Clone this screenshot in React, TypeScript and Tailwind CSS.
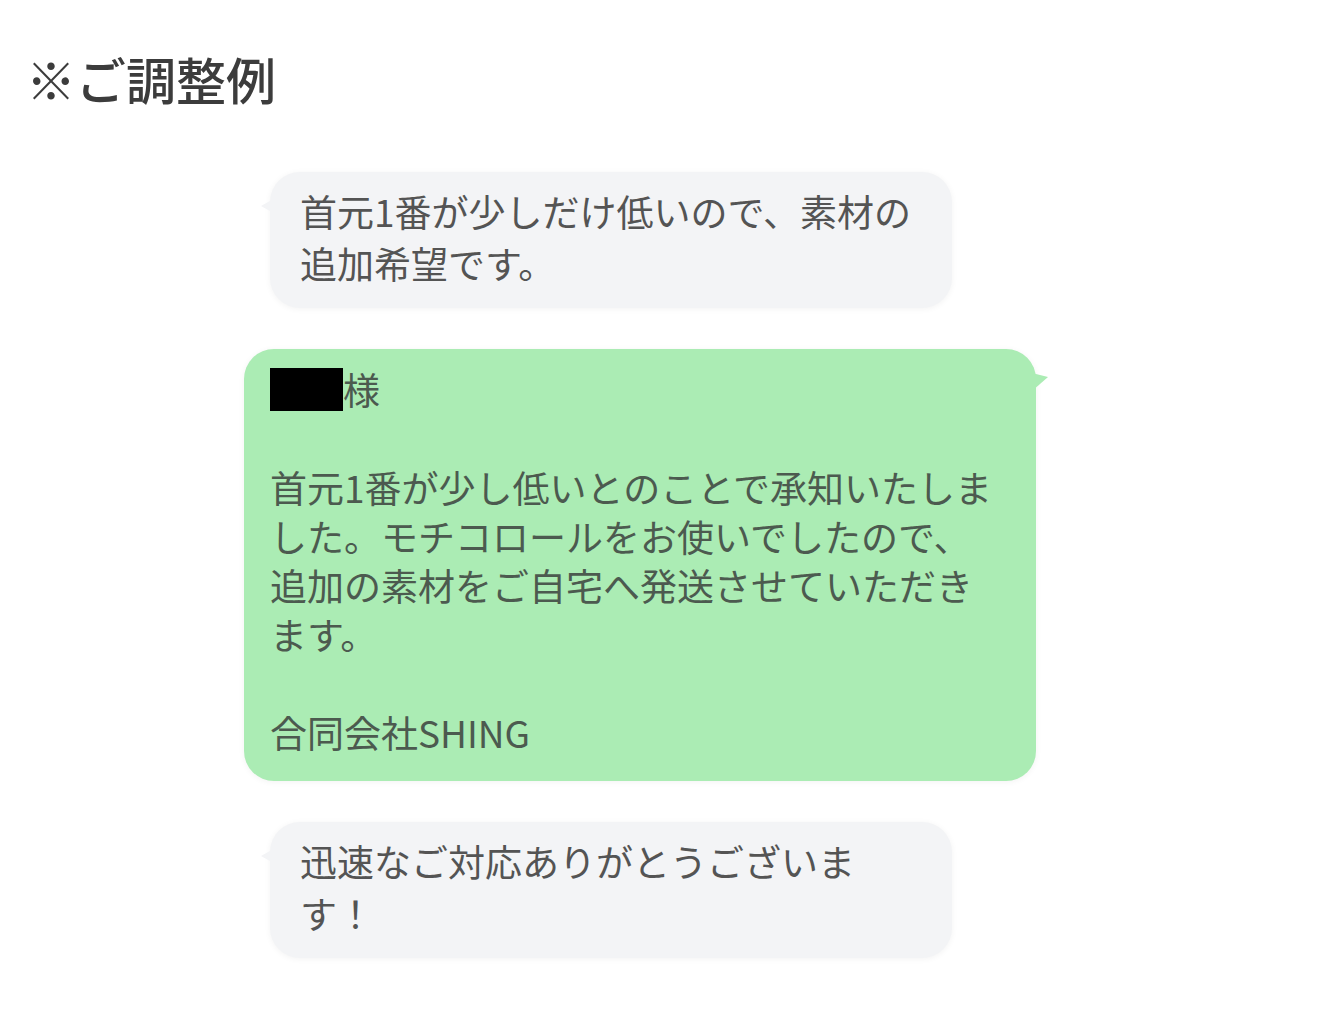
const font = { fontFamily: '"Noto Sans CJK JP", "Noto Sans", sans-serif' };

const GrayBubble = ({ children }: { children: React.ReactNode }) => (
  <div className="relative ml-[26px] w-[682px] rounded-[30px] bg-[#f3f4f6] pl-[30px] pr-4 pt-[13px] pb-[19px] text-[37px] leading-[52px] text-[#545454] shadow-[0_1px_6px_rgba(0,0,0,0.05)]">
    <svg className="absolute left-[-9px] top-[26px]" width="14" height="16" viewBox="0 0 14 16">
      <path d="M14 0 L0 8 L14 16 Z" fill="#f3f4f6" />
    </svg>
    {children}
  </div>
);

export default function App() {
  return (
    <div className="min-h-[1020px] w-[1324px] bg-white" style={font}>
      <div className="pl-[26px] pt-[53px]">
        <h1 className="text-[50px] font-medium leading-[50px] text-[#3c3c3c]">
          ※ご調整例
        </h1>
      </div>

      <div className="mt-[69px] flex flex-col gap-[41px] pl-[244px]">
        <GrayBubble>
          首元1番が少しだけ低いので、素材の
          <br />
          追加希望です。
        </GrayBubble>

        <div className="relative w-[792px] rounded-[30px] bg-[#abecb4] pl-[26px] pr-4 pt-[16px] pb-[24px] text-[37px] leading-[49px] text-[#4c5a4f] shadow-[0_1px_6px_rgba(0,0,0,0.05)]">
          <svg className="absolute right-[-12px] top-[24px]" width="16" height="18" viewBox="0 0 16 18">
            <path d="M0 0 L16 4 L0 18 Z" fill="#abecb4" />
          </svg>
          <div className="flex items-center">
            <span className="inline-block h-[43px] w-[73px] bg-black" />
            <span>様</span>
          </div>
          <div className="h-[49px]" />
          <p>
            首元1番が少し低いとのことで承知いたしま
            <br />
            した。モチコロールをお使いでしたので、
            <br />
            追加の素材をご自宅へ発送させていただき
            <br />
            ます。
          </p>
          <div className="h-[49px]" />
          <p>合同会社SHING</p>
        </div>

        <GrayBubble>
          迅速なご対応ありがとうございま
          <br />
          す！
        </GrayBubble>
      </div>
    </div>
  );
}
